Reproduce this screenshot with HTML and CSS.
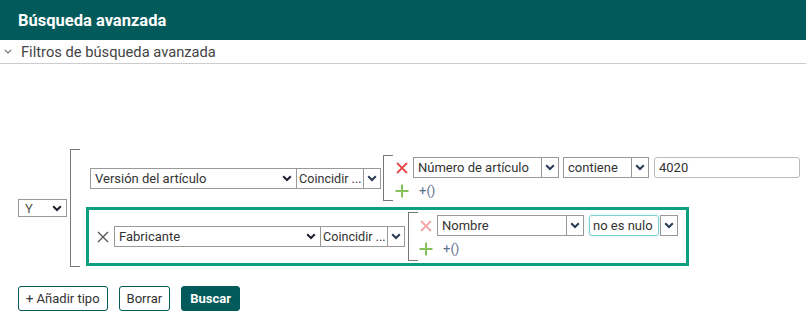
FILE: index.html
```html
<!DOCTYPE html>
<html lang="es">
<head>
  <meta charset="UTF-8">
  <meta name="viewport" content="width=device-width, initial-scale=1">
  <title>Búsqueda avanzada</title>
  <link rel="stylesheet" href="styles.css">
</head>
<body>
  <!-- Cabecera -->
  <header class="topbar">
    <h1>Búsqueda avanzada</h1>
  </header>

  <!-- Sección plegable -->
  <div class="section-toggle">
    <svg class="toggle-chev" width="8" height="5" viewBox="0 0 8 5"><path d="M1 1l3 3 3-3" stroke="#777" stroke-width="1.2" fill="none"/></svg>
    <span>Filtros de búsqueda avanzada</span>
  </div>

  <main class="builder">
    <div class="query">
      <div class="field op-select">
        <span>Y</span>
        <svg class="chev" width="10" height="7" viewBox="0 0 10 7"><path d="M1.2 1.2l3.8 3.8 3.8-3.8" stroke="#1e2230" stroke-width="2" fill="none"/></svg>
      </div>

      <div class="group">
        <div class="bracket"></div>
        <div class="group-body">

          <!-- Fila 1 -->
          <div class="row row-first">
            <div class="field type-select">
              <span>Versión del artículo</span>
              <svg class="chev" width="10" height="7" viewBox="0 0 10 7"><path d="M1.2 1.2l3.8 3.8 3.8-3.8" stroke="#1e2230" stroke-width="2" fill="none"/></svg>
            </div>
            <div class="field match-select"><span>Coincidir ...</span></div>
            <div class="arrow-btn"><svg width="10" height="7" viewBox="0 0 10 7"><path d="M1.2 1.2l3.8 3.8 3.8-3.8" stroke="#2a3a55" stroke-width="2" fill="none"/></svg></div>

            <div class="sub-group">
              <div class="bracket"></div>
              <div class="conds">
                <div class="cond-line">
                  <svg class="icon" width="14" height="14" viewBox="0 0 14 14"><path d="M2 2l10 10M12 2L2 12" stroke="#e44b4b" stroke-width="1.8" fill="none"/></svg>
                  <div class="field prop-select"><span>Número de artículo</span></div>
                  <div class="arrow-btn"><svg width="10" height="7" viewBox="0 0 10 7"><path d="M1.2 1.2l3.8 3.8 3.8-3.8" stroke="#2a3a55" stroke-width="2" fill="none"/></svg></div>
                  <div class="field op-field gap4"><span>contiene</span></div>
                  <div class="arrow-btn"><svg width="10" height="7" viewBox="0 0 10 7"><path d="M1.2 1.2l3.8 3.8 3.8-3.8" stroke="#2a3a55" stroke-width="2" fill="none"/></svg></div>
                  <div class="text-input value-input">4020</div>
                </div>
                <div class="add-line">
                  <svg class="icon" width="14" height="14" viewBox="0 0 14 14"><path d="M7 0.5v13M0.5 7h13" stroke="#86c35a" stroke-width="2" fill="none"/></svg>
                  <span class="paren">+()</span>
                </div>
              </div>
            </div>
          </div>

          <!-- Fila 2 (seleccionada) -->
          <div class="row row-active">
            <svg class="row-del" width="12" height="12" viewBox="0 0 12 12"><path d="M1 1l10 10M11 1L1 11" stroke="#555" stroke-width="1.3" fill="none"/></svg>
            <div class="field type-select">
              <span>Fabricante</span>
              <svg class="chev" width="10" height="7" viewBox="0 0 10 7"><path d="M1.2 1.2l3.8 3.8 3.8-3.8" stroke="#1e2230" stroke-width="2" fill="none"/></svg>
            </div>
            <div class="field match-select"><span>Coincidir ...</span></div>
            <div class="arrow-btn"><svg width="10" height="7" viewBox="0 0 10 7"><path d="M1.2 1.2l3.8 3.8 3.8-3.8" stroke="#2a3a55" stroke-width="2" fill="none"/></svg></div>

            <div class="sub-group">
              <div class="bracket"></div>
              <div class="conds">
                <div class="cond-line">
                  <svg class="icon" width="14" height="14" viewBox="0 0 14 14"><path d="M2 2l10 10M12 2L2 12" stroke="#f3a7a7" stroke-width="1.8" fill="none"/></svg>
                  <div class="field prop-select wide"><span>Nombre</span></div>
                  <div class="arrow-btn"><svg width="10" height="7" viewBox="0 0 10 7"><path d="M1.2 1.2l3.8 3.8 3.8-3.8" stroke="#2a3a55" stroke-width="2" fill="none"/></svg></div>
                  <div class="text-input focus-input"><span>no es nulo</span></div>
                  <div class="arrow-btn gap1"><svg width="10" height="7" viewBox="0 0 10 7"><path d="M1.2 1.2l3.8 3.8 3.8-3.8" stroke="#2a3a55" stroke-width="2" fill="none"/></svg></div>
                </div>
                <div class="add-line">
                  <svg class="icon" width="14" height="14" viewBox="0 0 14 14"><path d="M7 0.5v13M0.5 7h13" stroke="#86c35a" stroke-width="2" fill="none"/></svg>
                  <span class="paren">+()</span>
                </div>
              </div>
            </div>
          </div>

        </div>
      </div>
    </div>

    <!-- Botones -->
    <div class="actions">
      <button class="btn">+ Añadir tipo</button>
      <button class="btn">Borrar</button>
      <button class="btn btn-primary">Buscar</button>
    </div>
  </main>
</body>
</html>
```

FILE: styles.css
```css
/* Reset */
* {
  margin: 0;
  padding: 0;
  box-sizing: border-box;
}
body {
  font-family: Roboto, "Liberation Sans", sans-serif;
  color: #333;
  background: #fff;
  overflow: hidden;
}
/* Cabecera */
.topbar {
  background: #035a5a;
  height: 40px;
  padding: 0 18px;
  display: flex;
  align-items: center;
}
.topbar h1 {
  color: #fff;
  font-size: 16.5px;
  font-weight: 700;
}
/* Sección de filtros */
.section-toggle {
  height: 24px;
  border-bottom: 1px solid #ccc;
  display: flex;
  align-items: center;
  padding-left: 4px;
  font-size: 14.7px;
  color: #444;
}
.toggle-chev {
  margin-right: 9px;
}
/* Constructor de consulta */
.builder {
  padding: 85px 0 0 18px;
}
.query {
  display: flex;
  align-items: center;
}
.field {
  height: 21px;
  border: 1px solid #999;
  background: #fff;
  display: flex;
  align-items: center;
  padding: 0 4px;
  font-size: 13px;
  color: #333;
  white-space: nowrap;
  overflow: hidden;
}
.field span {
  flex: 1;
}
.op-select {
  width: 49px;
  height: 18px;
  padding: 0 4px 0 6px;
  color: #555;
}
.group {
  display: flex;
  margin-left: 3px;
}
.bracket {
  width: 10px;
  border: 1px solid #777;
  border-right: 0;
}
.group-body {
  padding: 6px 0 1px 6px;
  display: flex;
  flex-direction: column;
  align-items: flex-start;
  gap: 6px;
}
.row {
  display: flex;
  align-items: center;
}
.row-first {
  padding-left: 4px;
}
.row-active {
  border: 3px solid #0c9f80;
  padding: 2px 8px 2px 8px;
}
.row-del {
  margin-right: 5px;
}
.type-select {
  width: 207px;
}
.match-select {
  width: 68px;
  margin-left: -1px;
  padding: 0 2px;
  font-size: 12.6px;
}
.arrow-btn {
  width: 18px;
  height: 21px;
  margin-left: -1px;
  border: 1px solid #999;
  display: flex;
  align-items: center;
  justify-content: center;
}
.sub-group {
  display: flex;
  margin-left: 2px;
}
.row-active .sub-group {
  margin-left: 3px;
}
.conds {
  padding: 2px 0 1px 2px;
}
.row-active .conds {
  padding: 3px 0 3px 1px;
}
.cond-line,
.add-line {
  display: flex;
  align-items: center;
}
.icon {
  margin-right: 4px;
}
.prop-select {
  width: 129px;
}
.prop-select.wide {
  width: 130px;
}
.op-field {
  width: 69px;
}
.gap4 {
  margin-left: 4px;
}
.gap1 {
  margin-left: 1px;
}
.text-input {
  height: 21px;
  border: 1px solid #bbb;
  border-radius: 3px;
  padding: 0 4px;
  font-size: 13px;
  display: flex;
  align-items: center;
  margin-left: 5px;
}
.value-input {
  width: 146px;
}
.focus-input {
  width: 70px;
  padding: 0 3px;
  border-color: #7fcfcf;
  box-shadow: 0 0 2px #a8e0e0;
  white-space: nowrap;
}
.add-line {
  height: 22px;
  padding-top: 3px;
}
.paren {
  margin-left: 6px;
  font-size: 13px;
  color: #5b6f8f;
}
/* Botones */
.actions {
  display: flex;
  gap: 11px;
  margin-top: 19px;
}
.btn {
  font-family: Roboto, "Liberation Sans", sans-serif;
  font-size: 13px;
  height: 25px;
  padding: 0 7px;
  border: 1px solid #035a5a;
  border-radius: 3px;
  background: #fff;
  color: #333;
}
.btn-primary {
  background: #035a5a;
  color: #fff;
  font-weight: 700;
  padding: 0 8px;
}
```
